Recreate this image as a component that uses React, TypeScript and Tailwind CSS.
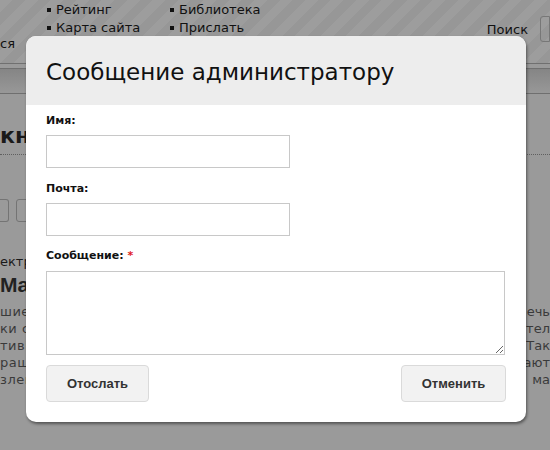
import React from "react";

const verdana = "font-['DejaVu_Sans','Verdana',sans-serif]";

export default function App() {
  const leftLines = ["шие", "ки с", "тиві", "ращ", "злен"];
  const rightLines = ["ечь", "ител", "Так", "ают", "ма"];
  return (
    <div className={`relative w-[550px] h-[450px] overflow-hidden bg-[#9a9a9a] ${verdana}`}>
      {/* page underneath (dimmed) */}
      <div className="flex flex-col">
        <div className="h-[63px] bg-[repeating-linear-gradient(135deg,#9d9d9d_0px,#9d9d9d_9px,#979797_9px,#979797_18px)] flex">
          <div className="w-[47px] flex flex-col justify-end pb-[10px] text-[13px] text-[#111]">
            <span>ся</span>
          </div>
          <div className="flex gap-[15px] pt-[1px] text-[13px] leading-[18px] text-[#111]">
            <ul className="w-[108px]">
              <li className="flex items-center gap-[5px]"><span className="w-[4px] h-[4px] bg-[#111]" />Рейтинг</li>
              <li className="flex items-center gap-[5px]"><span className="w-[4px] h-[4px] bg-[#111]" />Карта сайта</li>
            </ul>
            <ul>
              <li className="flex items-center gap-[5px]"><span className="w-[4px] h-[4px] bg-[#111]" />Библиотека</li>
              <li className="flex items-center gap-[5px]"><span className="w-[4px] h-[4px] bg-[#111]" />Прислать</li>
            </ul>
          </div>
          <div className="ml-auto flex items-start pt-[20px] gap-[12px] text-[13px] text-[#111]">
            <span>Поиск</span>
            <div className="w-[10px] h-[26px] border border-[#777] rounded-l-[3px] mt-[-4px]" />
          </div>
        </div>
        <div className="h-[1px] bg-[#707070]" />
        <div className="h-[4px] bg-[#9a9a9a]" />
        <div className="h-[1px] bg-[#707070]" />
        <div className="h-[24px] bg-[linear-gradient(#858585,#989898)]" />
        <div className="h-[1px] bg-[#6f6f6f]" />
        <div className="pt-[30px] flex justify-between">
          <span className="text-[22px] font-bold leading-[24px] text-[#1a1a1a]">кн</span>
        </div>
        <div className="mt-[6px] border-b border-dotted border-[#5f5f5f]" />
        <div className="mt-[44px] flex gap-[7px]">
          <div className="w-[9px] h-[23px] border border-[#747474] border-l-0 rounded-r-[3px]" />
          <div className="w-[15px] h-[23px] border border-[#747474] rounded-[3px]" />
        </div>
        <div className="mt-[32px] text-[13px] leading-[16px] text-[#1a1a1a]">ектр</div>
        <div className="mt-[3px] font-['Liberation_Sans',Arial,sans-serif] text-[21px] font-bold leading-[24px] text-[#222]">Mag</div>
        <div className="mt-[6px] flex flex-col text-[13px] leading-[17px] text-[#3a3a3a] tracking-[0.5px]">
          {leftLines.map((l, i) => (
            <div key={i} className="flex justify-between">
              <span>{l}</span>
              <span className="whitespace-nowrap tracking-normal">{rightLines[i]}</span>
            </div>
          ))}
        </div>
      </div>

      {/* modal */}
      <div className="absolute left-[26px] top-[36px] w-[500px] bg-white rounded-[10px] overflow-hidden shadow-[1px_2px_3px_rgba(0,0,0,0.45)]">
        <div className="h-[69px] bg-[#ededed] px-[20px] flex items-center">
          <h1 className="text-[23px] text-[#111] leading-[28px] pt-[2px]">Сообщение администратору</h1>
        </div>
        <div className="px-[20px] pt-[8px] pb-[20px] flex flex-col">
          <label className="text-[11px] font-bold leading-[16px] text-[#111]">Имя:</label>
          <input className="mt-[6px] w-[244px] h-[33px] border border-[#c8c8c8] bg-white" />
          <label className="mt-[13px] text-[11px] font-bold leading-[16px] text-[#111]">Почта:</label>
          <input className="mt-[6px] w-[244px] h-[33px] border border-[#c8c8c8] bg-white" />
          <label className="mt-[12px] text-[11px] font-bold leading-[16px] text-[#111]">
            Сообщение: <span className="text-[#e02020]">*</span>
          </label>
          <textarea className="mt-[7px] w-[459px] h-[84px] border border-[#c8c8c8] bg-white" />
          <div className="mt-[10px] flex justify-between w-[460px]">
            <button className="w-[103px] h-[37px] bg-[#f2f2f2] border border-[#dadada] rounded-[4px] font-['Liberation_Sans',Arial,sans-serif] text-[13px] font-bold text-[#333]">
              Отослать
            </button>
            <button className="w-[105px] h-[37px] bg-[#f2f2f2] border border-[#dadada] rounded-[4px] font-['Liberation_Sans',Arial,sans-serif] text-[13px] font-bold text-[#333]">
              Отменить
            </button>
          </div>
        </div>
      </div>
    </div>
  );
}
